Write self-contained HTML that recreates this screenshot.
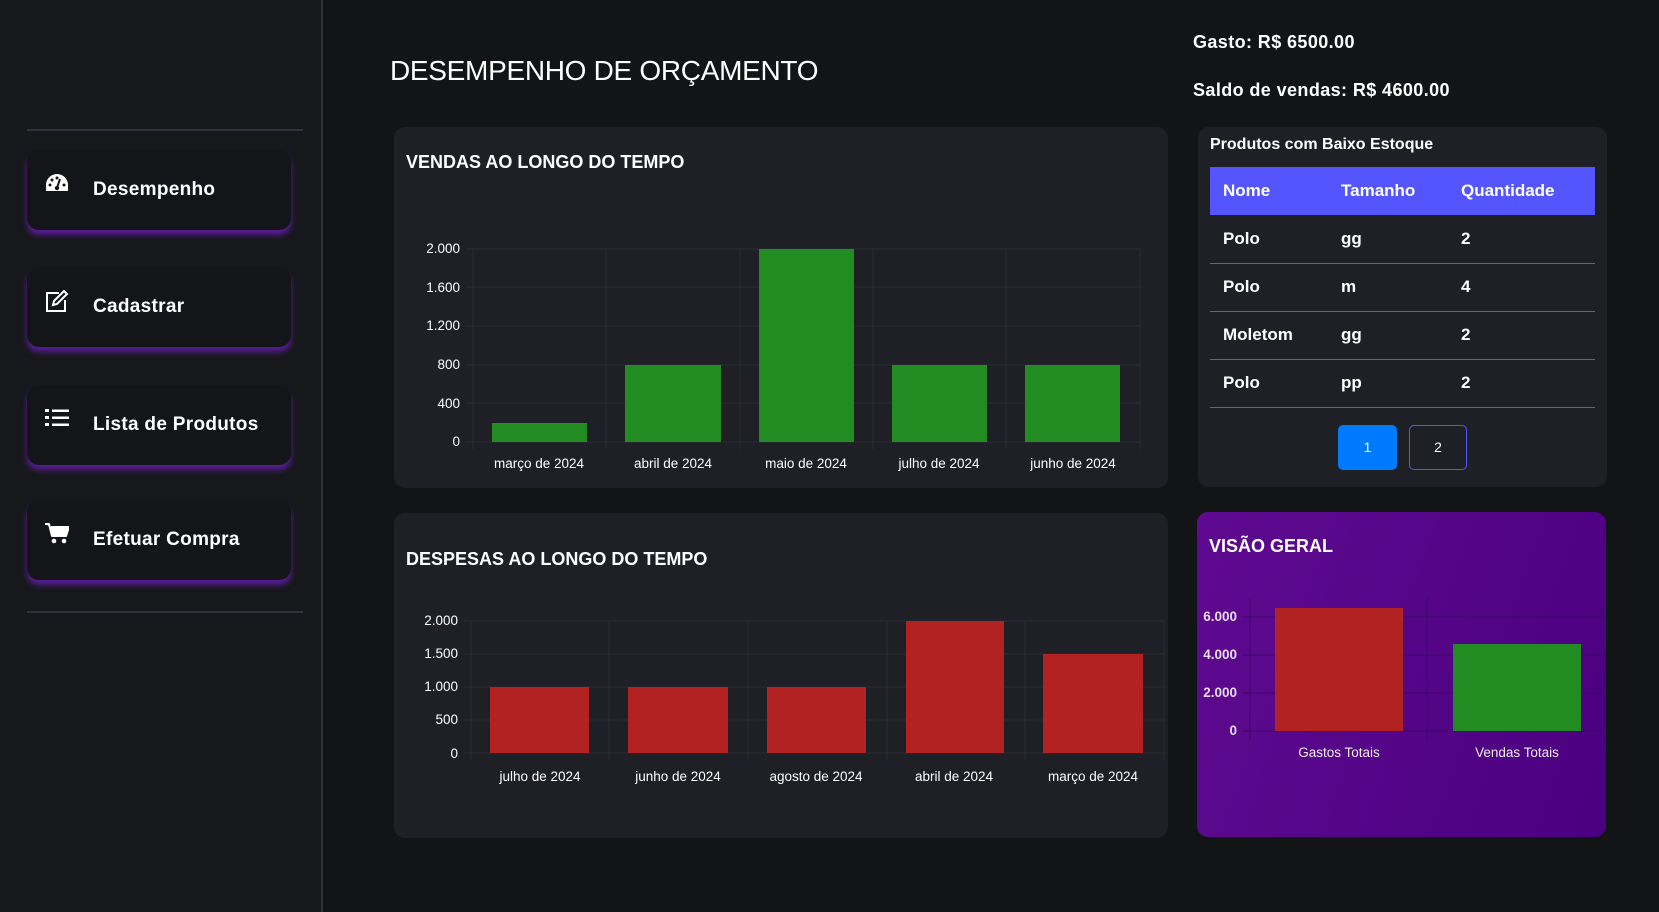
<!DOCTYPE html>
<html><head><meta charset="utf-8"><style>
*{margin:0;padding:0;box-sizing:border-box}
body{width:1659px;height:912px;background:#131416;font-family:"Liberation Sans",sans-serif;color:#fff;position:relative;overflow:hidden}
.side{position:absolute;left:0;top:0;width:323px;height:912px;background:#17181c;border-right:2px solid #2c2f37}
.hr{position:absolute;left:27px;width:276px;height:2px;background:#2e323b}
.nav{position:absolute;left:27px;width:264px;height:80px;background:#141519;border-radius:12px;box-shadow:0 5px 6px rgba(110,30,190,.75)}
.nav svg{position:absolute;left:18px;top:23px}
.nav span{position:absolute;left:66px;top:29px;font-size:19px;font-weight:bold;letter-spacing:.3px}
.card{position:absolute;background:#1e2026;border-radius:11px}
.ct{position:absolute;font-weight:bold;font-size:18px}
table{border-collapse:collapse;position:absolute;left:12px;top:40px;width:385px;font-size:17px;font-weight:bold}
th{background:#5555ff;height:48px;text-align:left;padding-left:13px}
td{height:48px;padding-left:13px;border-bottom:1.5px solid #5555ff}
</style></head><body>
<div class="side">
<div class="hr" style="top:129px"></div>
<div class="hr" style="top:611px"></div>
<div class="nav" style="top:150px"><svg width="24" height="20" viewBox="0 0 24 20"><path d="M12 1A11 11 0 0 0 1 12v6h22v-6A11 11 0 0 0 12 1z" fill="#fff"/><circle cx="5" cy="12" r="1.5" fill="#141519"/><circle cx="7" cy="7" r="1.5" fill="#141519"/><circle cx="12" cy="5" r="1.5" fill="#141519"/><circle cx="19" cy="12" r="1.5" fill="#141519"/><path d="M12 15L15 6" stroke="#141519" stroke-width="2"/><circle cx="12" cy="15" r="2.2" fill="#141519"/></svg><span>Desempenho</span></div>
<div class="nav" style="top:267px"><svg width="24" height="22" viewBox="0 0 24 22"><path d="M14 3H2v18h18V10" fill="none" stroke="#fff" stroke-width="2"/><path d="M19 1l3 3-10 10-4 1 1-4z" fill="none" stroke="#fff" stroke-width="2"/></svg><span>Cadastrar</span></div>
<div class="nav" style="top:385px"><svg width="24" height="20" viewBox="0 0 24 20"><rect x="0" y="1" width="4" height="3" fill="#fff"/><rect x="0" y="8" width="4" height="3" fill="#fff"/><rect x="0" y="15" width="4" height="3" fill="#fff"/><rect x="7" y="1.5" width="17" height="2.5" fill="#fff"/><rect x="7" y="8.5" width="17" height="2.5" fill="#fff"/><rect x="7" y="15.5" width="17" height="2.5" fill="#fff"/></svg><span>Lista de Produtos</span></div>
<div class="nav" style="top:500px"><svg width="24" height="22" viewBox="0 0 24 22"><path d="M0 1h4l3 12h14l3-9H6" fill="#fff" stroke="#fff" stroke-width="2" stroke-linejoin="round"/><circle cx="9" cy="18" r="2.3" fill="#fff"/><circle cx="19" cy="18" r="2.3" fill="#fff"/></svg><span>Efetuar Compra</span></div>
</div>

<div style="position:absolute;left:390px;top:55px;font-size:28px;letter-spacing:-.3px">DESEMPENHO DE ORÇAMENTO</div>
<div style="position:absolute;left:1193px;top:32px;font-size:18px;font-weight:bold;letter-spacing:.4px">Gasto: R$ 6500.00</div>
<div style="position:absolute;left:1193px;top:80px;font-size:18px;font-weight:bold;letter-spacing:.4px">Saldo de vendas: R$ 4600.00</div>

<div class="card" style="left:394px;top:127px;width:774px;height:361px"></div>
<div class="ct" style="left:406px;top:152px">VENDAS AO LONGO DO TEMPO</div>
<svg style="position:absolute;left:0;top:0" width="1659" height="912" font-family="Liberation Sans" font-size="13.5" fill="#fff">
<g stroke="#2a2d34" stroke-width="1">
<line x1="466" y1="249" x2="1140" y2="249"/><line x1="466" y1="287" x2="1140" y2="287"/><line x1="466" y1="326" x2="1140" y2="326"/><line x1="466" y1="365" x2="1140" y2="365"/><line x1="466" y1="403" x2="1140" y2="403"/><line x1="466" y1="442" x2="1140" y2="442"/>
<line x1="473" y1="249" x2="473" y2="449"/><line x1="606" y1="249" x2="606" y2="449"/><line x1="740" y1="249" x2="740" y2="449"/><line x1="873" y1="249" x2="873" y2="449"/><line x1="1006" y1="249" x2="1006" y2="449"/><line x1="1140" y1="249" x2="1140" y2="449"/>
</g>
<g fill="#228b22"><rect x="492" y="423" width="95" height="19"/><rect x="625" y="365" width="96" height="77"/><rect x="759" y="249" width="95" height="193"/><rect x="892" y="365" width="95" height="77"/><rect x="1025" y="365" width="95" height="77"/></g>
<g text-anchor="end"><text x="460" y="253">2.000</text><text x="460" y="292">1.600</text><text x="460" y="330">1.200</text><text x="460" y="369">800</text><text x="460" y="408">400</text><text x="460" y="446">0</text></g>
<g text-anchor="middle"><text x="539" y="468">março de 2024</text><text x="673" y="468">abril de 2024</text><text x="806" y="468">maio de 2024</text><text x="939" y="468">julho de 2024</text><text x="1073" y="468">junho de 2024</text></g>
</svg>

<div class="card" style="left:1198px;top:127px;width:409px;height:360px">
<div style="position:absolute;left:12px;top:9px;font-size:16px;font-weight:bold">Produtos com Baixo Estoque</div>
<table><tr><th style="width:118px">Nome</th><th style="width:120px">Tamanho</th><th>Quantidade</th></tr>
<tr><td>Polo</td><td>gg</td><td>2</td></tr><tr><td>Polo</td><td>m</td><td>4</td></tr><tr><td>Moletom</td><td>gg</td><td>2</td></tr><tr><td>Polo</td><td>pp</td><td>2</td></tr></table>
<div style="position:absolute;left:140px;top:298px;width:59px;height:45px;background:#007bff;border-radius:5px;text-align:center;line-height:45px;font-size:14px">1</div>
<div style="position:absolute;left:211px;top:298px;width:58px;height:45px;border:1.5px solid #5555ff;border-radius:5px;text-align:center;line-height:42px;font-size:14px">2</div>
</div>

<div class="card" style="left:394px;top:513px;width:774px;height:325px"></div>
<div class="ct" style="left:406px;top:549px">DESPESAS AO LONGO DO TEMPO</div>
<svg style="position:absolute;left:0;top:0" width="1659" height="912" font-family="Liberation Sans" font-size="13.5" fill="#fff">
<g stroke="#2a2d34"><line x1="464" y1="621" x2="1164" y2="621"/><line x1="464" y1="654" x2="1164" y2="654"/><line x1="464" y1="687" x2="1164" y2="687"/><line x1="464" y1="720" x2="1164" y2="720"/><line x1="464" y1="753" x2="1164" y2="753"/>
<line x1="471" y1="621" x2="471" y2="760"/><line x1="609" y1="621" x2="609" y2="760"/><line x1="748" y1="621" x2="748" y2="760"/><line x1="887" y1="621" x2="887" y2="760"/><line x1="1025" y1="621" x2="1025" y2="760"/><line x1="1164" y1="621" x2="1164" y2="760"/></g>
<g fill="#b22222"><rect x="490" y="687" width="99" height="66"/><rect x="628" y="687" width="100" height="66"/><rect x="767" y="687" width="99" height="66"/><rect x="906" y="621" width="98" height="132"/><rect x="1043" y="654" width="100" height="99"/></g>
<g text-anchor="end"><text x="458" y="625">2.000</text><text x="458" y="658">1.500</text><text x="458" y="691">1.000</text><text x="458" y="724">500</text><text x="458" y="758">0</text></g>
<g text-anchor="middle"><text x="540" y="781">julho de 2024</text><text x="678" y="781">junho de 2024</text><text x="816" y="781">agosto de 2024</text><text x="954" y="781">abril de 2024</text><text x="1093" y="781">março de 2024</text></g>
</svg>

<div class="card" style="left:1197px;top:512px;width:409px;height:325px;background:linear-gradient(110deg,#5f0a90,#4a0080)"></div>
<div class="ct" style="left:1209px;top:536px">VISÃO GERAL</div>
<svg style="position:absolute;left:0;top:0" width="1659" height="912" font-family="Liberation Sans" font-size="13.5" fill="#e8dcf0" font-weight="bold">
<g stroke="#3e0868"><line x1="1243" y1="617" x2="1605" y2="617"/><line x1="1243" y1="655" x2="1605" y2="655"/><line x1="1243" y1="693" x2="1605" y2="693"/><line x1="1243" y1="731" x2="1605" y2="731"/>
<line x1="1250" y1="598" x2="1250" y2="740"/><line x1="1427" y1="598" x2="1427" y2="740"/></g>
<rect x="1275" y="608" width="128" height="123" fill="#b22222"/><rect x="1453" y="644" width="128" height="87" fill="#228b22"/>
<g text-anchor="end"><text x="1237" y="621">6.000</text><text x="1237" y="659">4.000</text><text x="1237" y="697">2.000</text><text x="1237" y="735">0</text></g>
<g text-anchor="middle" font-weight="normal" fill="#eee"><text x="1339" y="757">Gastos Totais</text><text x="1517" y="757">Vendas Totais</text></g>
</svg>
</body></html>
